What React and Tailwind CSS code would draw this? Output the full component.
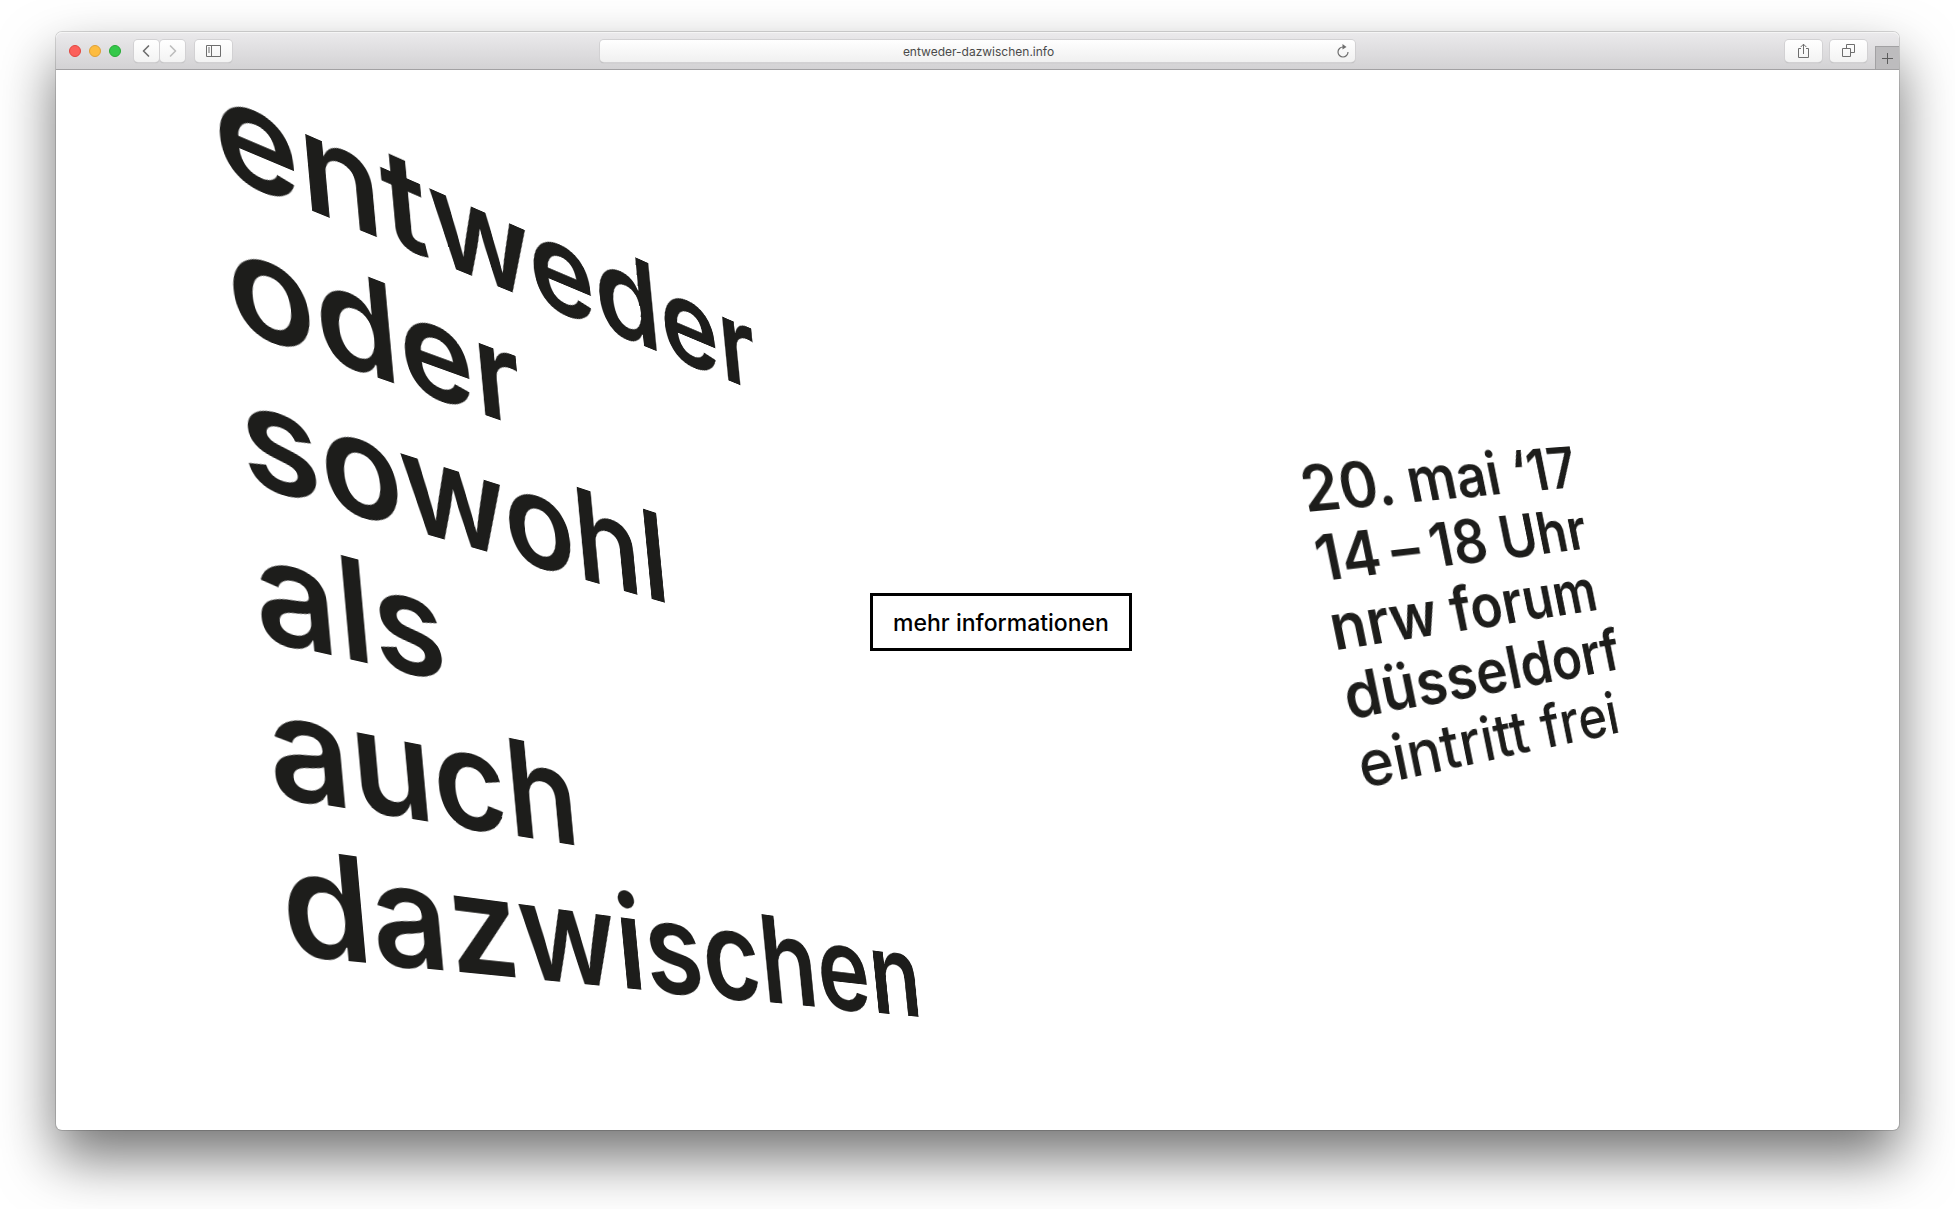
import { ChevronLeft, ChevronRight } from "lucide-react";

const headline = ["entweder", "oder", "sowohl", "als", "auch", "dazwischen"];

const details = [
    { id: "date", text: "20. mai ‘17", weight: "font-semibold" },
    { id: "time", text: <>14<span className="mx-3">–</span>18 Uhr</>, weight: "font-semibold" },
    { id: "venue", text: "nrw forum", weight: "font-semibold" },
    { id: "city", text: "düsseldorf", weight: "font-semibold" },
    { id: "entry", text: "eintritt frei", weight: "font-medium" },
];

// Projects a width x height plane of type onto four corners (clockwise from top left).
// `baseline` is the distance from the box top to the first baseline.
function project(width, height, baseline, [[x0, y0], [x1, y1], [x2, y2], [x3, y3]]) {
    const dx1 = x1 - x2, dx2 = x3 - x2, dx3 = x0 - x1 + x2 - x3;
    const dy1 = y1 - y2, dy2 = y3 - y2, dy3 = y0 - y1 + y2 - y3;
    const den = dx1 * dy2 - dx2 * dy1;
    const g = (dx3 * dy2 - dx2 * dy3) / den;
    const h = (dx1 * dy3 - dx3 * dy1) / den;
    const m = [
        (x1 - x0 + g * x1) / width, (y1 - y0 + g * y1) / width, 0, g / width,
        (x3 - x0 + h * x3) / height, (y3 - y0 + h * y3) / height, 0, h / height,
        0, 0, 1, 0,
        x0, y0, 0, 1,
    ];
    return { transform: `matrix3d(${m.map((n) => n.toFixed(8)).join(",")}) translateY(${-baseline}px)` };
}

const headlinePlane = project(682, 780, 132, [[-2, 102], [538, 322], [599, 937], [67, 885]]);
const detailsPlane = project(312, 272, 56, [[3, 60], [274, 35], [323, 279], [60, 336]]);

function ToolButton({ label, className, children }) {
    return (
        <button
            aria-label={label}
            className={`flex h-[22px] items-center justify-center rounded bg-linear-to-b from-white to-[#f3f3f3] text-[#6e6e6e] shadow-[0_0_0_1px_#d2d1d3,0_1px_1px_#a9a9a9] ${className}`}
        >
            {children}
        </button>
    );
}

function Toolbar() {
    return (
        <header className="grid h-[38px] grid-cols-[1fr_41%_1fr] items-center rounded-t-md border-b border-[#a2a1a3] bg-linear-to-b from-[#ebeaec] to-[#d3d2d4] shadow-[inset_0_1px_0_#f5f5f5]">
            <div className="flex items-center pl-[13px]">
                <div className="flex gap-2">
                    <button aria-label="Schließen" className="size-3 rounded-full border border-[#e2463f] bg-[#fc605b]" />
                    <button aria-label="Minimieren" className="size-3 rounded-full border border-[#dfa035] bg-[#fdbc40]" />
                    <button aria-label="Vergrößern" className="size-3 rounded-full border border-[#27aa35] bg-[#34c84a]" />
                </div>
                <div className="ml-[13px] flex gap-px">
                    <ToolButton label="Zurück" className="w-[25px] pr-0.5">
                        <ChevronLeft className="size-5" strokeWidth={2} />
                    </ToolButton>
                    <ToolButton label="Vorwärts" className="w-[25px]">
                        <ChevronRight className="size-5 text-[#bdbdbd]" strokeWidth={2} />
                    </ToolButton>
                </div>
                <ToolButton label="Seitenleiste" className="ml-[10px] w-[37px]">
                    <svg width="15" height="12" viewBox="0 0 15 12" fill="none" stroke="currentColor">
                        <path d="M.5.5h14v11H.5zM5.5.5v11M2 3h2M2 5h2M2 7h2" />
                    </svg>
                </ToolButton>
            </div>

            <div className="flex h-[22px] items-center rounded bg-linear-to-b from-white to-[#f0f0f0] pr-[6px] pl-[20px] shadow-[0_0_0_1px_#d2d1d3,0_1px_1px_#a0a0a0]">
                <input
                    aria-label="Adresse"
                    defaultValue="entweder-dazwischen.info"
                    className="min-w-0 flex-1 bg-transparent pt-0.5 text-center text-[12px] text-[#4a4a4a] outline-none"
                />
                <button aria-label="Neu laden" className="text-[#6e6e6e]">
                    <svg width="12" height="14" viewBox="0 0 12 14" fill="none" stroke="currentColor" strokeWidth="1.2">
                        <path d="M6 3a5 5 0 1 0 5 5" />
                        <path d="M5.5 0v5.6L9.5 2.9z" fill="currentColor" stroke="none" />
                    </svg>
                </button>
            </div>

            <div className="flex h-full items-center justify-end">
                <ToolButton label="Teilen" className="w-[37px]">
                    <svg width="13" height="16" viewBox="0 0 13 16" fill="none" stroke="currentColor" strokeWidth="1">
                        <path d="M4 5.5H1.5v9h10v-9H9M6.5 11V1.2M3.7 4l2.8-2.8L9.3 4" />
                    </svg>
                </ToolButton>
                <ToolButton label="Alle Tabs" className="mx-2 w-[37px]">
                    <svg width="13" height="13" viewBox="0 0 13 13" fill="none" stroke="currentColor" strokeWidth="1">
                        <path d="M.5 4.5h8v8h-8zM4.5 4V.5h8v8H9" />
                    </svg>
                </ToolButton>
                <button
                    aria-label="Neuer Tab"
                    className="flex h-[23px] w-6 items-center justify-center self-end border-t border-l border-[#a2a1a3] bg-[#bdbcbe] text-[#5c5c5c]"
                >
                    <svg width="11" height="11" viewBox="0 0 11 11" stroke="currentColor">
                        <path d="M5.5 0v11M0 5.5h11" />
                    </svg>
                </button>
            </div>
        </header>
    );
}

export default function App() {
    return (
        <div className="flex min-h-screen flex-col overflow-hidden bg-white px-14 pt-8 pb-[79px] font-['Inter',sans-serif]">
            <div className="flex flex-1 flex-col rounded-md bg-white shadow-[0_0_0_1px_rgba(0,0,0,0.15),0_28px_56px_rgba(0,0,0,0.55)]">
                <Toolbar />

                <main className="grid flex-1 grid-cols-[814fr_433fr_596fr] text-[#1d1d1b]">
                    <div className="min-w-0 pl-[163px]">
                        <h1
                            style={headlinePlane}
                            className="w-[560px] origin-top-left text-[149px] leading-[156px] font-semibold whitespace-nowrap"
                        >
                            {headline.map((word) => (
                                <span key={word} className="block">{word}</span>
                            ))}
                        </h1>
                    </div>

                    <div className="mt-11 min-w-0 self-center">
                        <button className="h-[58px] w-[262px] border-3 border-black pt-0.5 text-[23px] font-medium whitespace-nowrap text-black">
                            mehr informationen
                        </button>
                    </div>

                    <div className="mt-11 min-w-0 self-center">
                        <div
                            style={detailsPlane}
                            className="w-80 origin-top-left text-[62px] leading-[68px] whitespace-nowrap"
                        >
                            {details.map(({ id, text, weight }) => (
                                <p key={id} className={weight}>{text}</p>
                            ))}
                        </div>
                    </div>
                </main>
            </div>
        </div>
    );
}
